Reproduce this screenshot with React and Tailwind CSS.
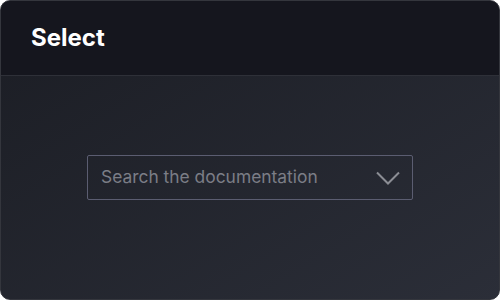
export default function App() {
  return (
    <div className="w-[500px] h-[300px] bg-white" style={{ fontFamily: 'Inter, "Noto Sans", sans-serif' }}>
      <div className="w-full h-full rounded-[10px] border border-[#34363d] overflow-hidden flex flex-col bg-gradient-to-br from-[#1b1d24] to-[#2b2e38]">
        <div className="h-[75px] shrink-0 bg-[#15161e] border-b border-[#2e3038] flex items-center px-[30px]">
          <h1 className="text-2xl font-bold text-white leading-none">Select</h1>
        </div>
        <div className="flex-1 flex items-start justify-center pt-[79px]">
          <button className="w-[326px] h-[45px] border border-[#5b5d71] rounded-[2px] flex items-center justify-between pl-[13px] pr-[12px]">
            <span className="text-[17.4px] text-[#7b7d86]">Search the documentation</span>
            <svg width="24" height="14" viewBox="0 0 24 14" fill="none" stroke="#8b8d94" strokeWidth="2">
              <path d="M1 1.5 L12 12.5 L23 1.5" />
            </svg>
          </button>
        </div>
      </div>
    </div>
  )
}
